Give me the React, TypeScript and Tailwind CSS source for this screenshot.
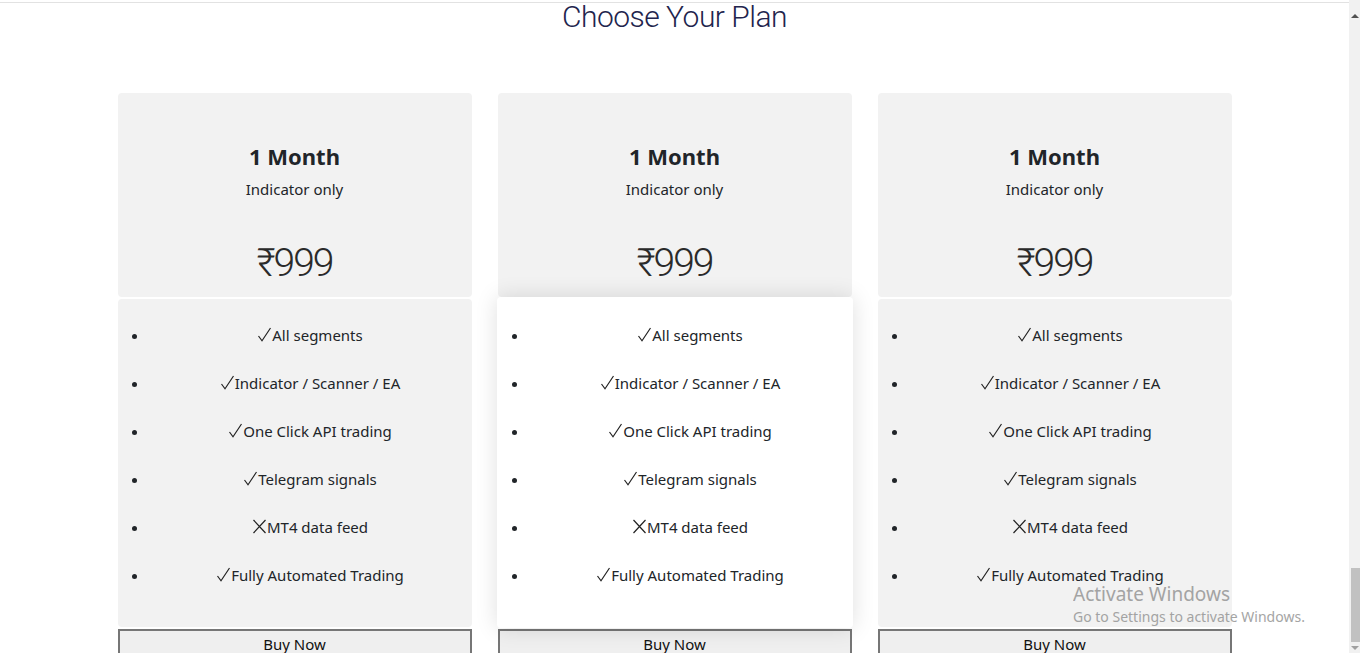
const features = [
  { ok: true, label: 'All segments' },
  { ok: true, label: 'Indicator / Scanner / EA' },
  { ok: true, label: 'One Click API trading' },
  { ok: true, label: 'Telegram signals' },
  { ok: false, label: 'MT4 data feed' },
  { ok: true, label: 'Fully Automated Trading' },
]

const plans = [
  { id: 1, name: '1 Month', sub: 'Indicator only', price: '₹999', featured: false },
  { id: 2, name: '1 Month', sub: 'Indicator only', price: '₹999', featured: true },
  { id: 3, name: '1 Month', sub: 'Indicator only', price: '₹999', featured: false },
]

const body = { fontFamily: '"Noto Sans", "DejaVu Sans", sans-serif' }
const display = { fontFamily: 'Roboto, "Noto Sans", sans-serif' }

function Mark({ ok }: { ok: boolean }) {
  return (
    <svg width="15" height="15" viewBox="0 0 15 15" className="inline-block align-baseline mb-[-1px]" fill="none" stroke="#222" strokeWidth="1.2">
      {ok ? <path d="M1.5 9 L5 13.8 L13.5 1" /> : <path d="M1.5 1 L13.5 14 M13.5 1 L1.5 14" />}
    </svg>
  )
}

function PlanCard({ plan }: { plan: (typeof plans)[number] }) {
  return (
    <div className="flex flex-col">
      <div className="h-[204px] rounded-[4px] bg-[#f2f2f2] text-center text-[#212529] pt-[48px]">
        <h3 className="text-[22px] leading-[30px] font-bold">{plan.name}</h3>
        <p className="mt-[7px] text-[15px] leading-[22px]">{plan.sub}</p>
        <div className="mt-[39px] text-[39px] leading-[48px] font-light tracking-[-2px] text-[#2a2a2a]" style={display}>
          {plan.price}
        </div>
      </div>

      <ul
        className={
          plan.featured
            ? 'relative z-10 -mx-px h-[331px] rounded-[4px] bg-white pt-[26px] pl-[32px] pr-[1px] list-disc shadow-[0_0_22px_rgba(0,0,0,0.13)]'
            : 'mt-[2px] h-[328px] rounded-[4px] bg-[#f2f2f2] pt-[24px] pl-[31px] list-disc'
        }
      >
        {features.map((f) => (
          <li key={f.label} className="mb-[24px] text-center text-[15px] leading-[24px] text-[#212529]">
            <Mark ok={f.ok} />
            {f.label}
          </li>
        ))}
      </ul>

      <button
        className={`${plan.featured ? 'mt-[1px]' : 'mt-[2px]'} h-[30px] border-2 border-[#767676] bg-[#efefef] text-[15px] leading-[26px] text-[#111]`}
      >
        Buy Now
      </button>
    </div>
  )
}

export default function App() {
  return (
    <div className="relative flex h-[653px] overflow-hidden bg-white" style={body}>
      <main className="flex-1 mt-[2px] border-t border-[#e2e2e2]">
        <h2 className="text-center text-[30px] leading-[28px] font-light tracking-[-0.5px] text-[#22244d]" style={display}>
          Choose Your Plan
        </h2>
        <div className="mx-auto mt-[62px] grid w-[1114px] grid-cols-3 gap-[26px]">
          {plans.map((p) => (
            <PlanCard key={p.id} plan={p} />
          ))}
        </div>
      </main>

      {/* fake scrollbar */}
      <div className="flex w-[11px] flex-col bg-[#f1f1f1]">
        <div className="flex h-[20px] items-end justify-center pb-[2px]">
          <div className="h-0 w-0 border-x-[4px] border-b-[4px] border-x-transparent border-b-[#505050]" />
        </div>
        <div className="flex-1" />
        <div className="ml-[2px] h-[74px] bg-[#c1c1c1]" />
        <div className="flex h-[11px] items-center justify-center">
          <div className="h-0 w-0 border-x-[4px] border-t-[4px] border-x-transparent border-t-[#a0a0a0]" />
        </div>
      </div>

      {/* windows activation watermark */}
      <div className="pointer-events-none absolute left-[1073px] top-[582px] text-[#9b9b9b] opacity-90">
        <div className="text-[19px] leading-[25px]">Activate Windows</div>
        <div className="text-[14px] leading-[20px]">Go to Settings to activate Windows.</div>
      </div>
    </div>
  )
}
